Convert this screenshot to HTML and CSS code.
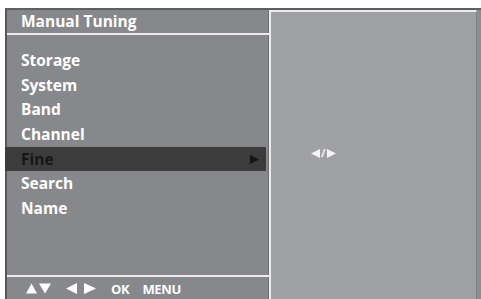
FILE: index.html
```html
<!DOCTYPE html>
<html>
<head>
<meta charset="utf-8">
<link rel="stylesheet" href="styles.css">
</head>
<body>
<div class="screen">
  <div class="left">
    <div class="title">Manual Tuning</div>
    <div class="menu">
      <div class="item">Storage</div>
      <div class="item">System</div>
      <div class="item">Band</div>
      <div class="item">Channel</div>
      <div class="item active"><span>Fine</span>
        <svg class="arrow" width="9" height="9" viewBox="0 0 9 9"><path d="M0 0 L9 4.5 L0 9 Z" fill="#141414"/></svg>
      </div>
      <div class="item">Search</div>
      <div class="item">Name</div>
    </div>
    <div class="footer">
      <svg class="tri" width="26" height="11" viewBox="0 0 26 11"><path d="M0 10.5 L5.5 0.5 L11 10.5 Z M13 0.5 L25 0.5 L19 10.5 Z" fill="#fff"/></svg>
      <svg class="tri lr" width="31" height="11" viewBox="0 0 31 11"><path d="M0 5.5 L11 0 L11 11 Z M18 0 L30 5.5 L18 11 Z" fill="#fff"/></svg>
      <span class="key ok">OK</span>
      <span class="key">MENU</span>
    </div>
  </div>
  <div class="right">
    <div class="value">
      <svg width="9" height="9" viewBox="0 0 9 9"><path d="M9 0 L0 4.5 L9 9 Z" fill="#f4f4f4"/></svg><span class="slash">/</span><svg width="9" height="9" viewBox="0 0 9 9"><path d="M0 0 L9 4.5 L0 9 Z" fill="#f4f4f4"/></svg>
    </div>
  </div>
</div>
</body>
</html>
```

FILE: styles.css
```css
html, body {
  margin: 0;
  padding: 0;
  background: #ffffff;
}
body {
  font-family: "Open Sans", "Noto Sans", sans-serif;
  width: 481px;
  height: 299px;
  overflow: hidden;
}
.screen {
  margin: 8px 0 0 5px;
  width: 476px;
  height: 289px;
  display: flex;
  border-top: 2px solid #5e5f63;
  background: #8c8d91;
}
.left {
  width: 261px;
  border-left: 2px solid #55565a;
  border-right: 1px solid #6e6f73;
  background: #87888c;
  display: flex;
  flex-direction: column;
}
.title {
  height: 23px;
  line-height: 23px;
  padding-left: 14px;
  color: #ffffff;
  font-weight: 700;
  font-size: 15.5px;
  border-bottom: 2px solid #ececee;
  margin-right: -3px;
}
.menu {
  padding-top: 13px;
  flex: 1;
}
.item {
  height: 24.7px;
  line-height: 24.7px;
  padding-left: 14px;
  color: #ffffff;
  font-weight: 700;
  font-size: 15.5px;
}
.item.active {
  background: #3c3c3d;
  color: #161616;
  margin-left: -2px;
  padding-left: 16px;
  margin-right: 2px;
  display: flex;
  align-items: center;
  justify-content: space-between;
  padding-right: 7px;
}
.arrow {
  display: block;
}
.footer {
  height: 22px;
  border-top: 2px solid #ececee;
  margin-right: -3px;
  display: flex;
  align-items: center;
  padding-left: 19px;
  color: #ffffff;
  font-weight: 700;
  font-size: 13px;
}
.tri {
  display: block;
  margin-top: 1px;
}
.tri.lr {
  margin-left: 14px;
}
.key {
  line-height: 22px;
  padding-top: 1px;
  letter-spacing: -0.3px;
}
.ok {
  margin-left: 14px;
  margin-right: 13px;
}
.right {
  width: 205px;
  border-left: 2px solid #ececee;
  border-top: 2px solid #ececee;
  border-right: 1px solid #7e7f83;
  background: #a0a1a5;
}
.value {
  margin: 135px 0 0 40px;
  height: 12px;
  display: flex;
  align-items: center;
  color: #f4f4f4;
  font-size: 11px;
  font-weight: 700;
}
.value svg {
  display: block;
}
.slash {
  margin: 0 1px;
  line-height: 12px;
}
```
